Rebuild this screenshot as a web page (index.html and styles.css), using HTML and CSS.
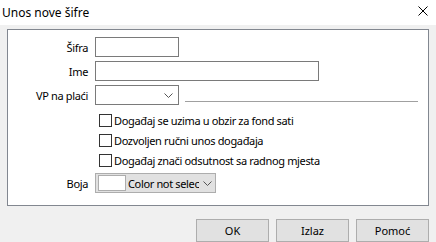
FILE: index.html
```html
<!DOCTYPE html>
<html lang="hr">
<head>
  <meta charset="UTF-8">
  <title>Unos nove šifre</title>
  <link rel="stylesheet" href="styles.css">
</head>
<body>
  <div class="dialog">
    <div class="titlebar">
      <span class="title">Unos nove šifre</span>
      <svg class="close" width="10" height="10" viewBox="0 0 10 10">
        <path d="M0.5 0.5 L9.5 9.5 M9.5 0.5 L0.5 9.5" stroke="#000" stroke-width="1" fill="none"/>
      </svg>
    </div>

    <div class="content">
      <div class="panel">
        <div class="row">
          <label class="lbl" for="sifra">Šifra</label>
          <input type="text" id="sifra" class="field short">
        </div>
        <div class="row">
          <label class="lbl" for="ime">Ime</label>
          <input type="text" id="ime" class="field long">
        </div>
        <div class="row">
          <label class="lbl">VP na plaći</label>
          <div class="combo">
            <svg class="chev" width="9" height="5" viewBox="0 0 9 5">
              <path d="M0.5 0.5 L4.5 4.5 L8.5 0.5" stroke="#555" fill="none"/>
            </svg>
          </div>
          <div class="rule"></div>
        </div>

        <div class="checks">
          <div class="check"><span class="box"></span>Događaj se uzima u obzir za fond sati</div>
          <div class="check"><span class="box"></span>Dozvoljen ručni unos događaja</div>
          <div class="check"><span class="box"></span>Događaj znači odsutnost sa radnog mjesta</div>
        </div>

        <div class="row boja-row">
          <label class="lbl">Boja</label>
          <div class="color-combo">
            <span class="swatch"></span>
            <span class="color-text">Color not selected</span>
            <svg class="chev" width="9" height="5" viewBox="0 0 9 5">
              <path d="M0.5 0.5 L4.5 4.5 L8.5 0.5" stroke="#555" fill="none"/>
            </svg>
          </div>
        </div>
      </div>

      <div class="buttons">
        <button class="btn">OK</button>
        <button class="btn">Izlaz</button>
        <button class="btn">Pomoć</button>
      </div>
    </div>
  </div>
</body>
</html>
```

FILE: styles.css
```css
body {
  margin: 0;
  font-family: "Noto Sans", "Open Sans", sans-serif;
  font-size: 11px;
  letter-spacing: -0.35px;
  color: #000;
  background: #f0f0f0;
}
.dialog {
  width: 436px;
  height: 242px;
  display: flex;
  flex-direction: column;
}
.titlebar {
  height: 25px;
  background: #fff;
  display: flex;
  align-items: center;
  justify-content: space-between;
  padding: 0 8px 0 2px;
}
.title {
  font-size: 12px;
  letter-spacing: 0;
  margin-top: -1px;
}
.close {
  margin-top: -3px;
}
.content {
  padding: 4px 7px 0 7px;
}
.panel {
  background: #fff;
  border: 1px solid #828790;
  height: 168px;
  padding-top: 7px;
  box-sizing: content-box;
}
.row {
  display: flex;
  align-items: center;
  height: 20px;
  margin-bottom: 4px;
}
.lbl {
  width: 80px;
  text-align: right;
  margin-right: 7px;
}
.field {
  height: 20px;
  box-sizing: border-box;
  border: 1px solid #7a7a7a;
  margin: 0;
  padding: 0 3px;
  font: inherit;
}
.short {
  width: 84px;
}
.long {
  width: 224px;
}
.combo {
  width: 84px;
  height: 20px;
  box-sizing: border-box;
  border: 1px solid #7a7a7a;
  display: flex;
  align-items: center;
  justify-content: flex-end;
  padding-right: 5px;
}
.rule {
  width: 233px;
  height: 1px;
  background: #a0a0a0;
  margin: 12px 0 0 6px;
}
.checks {
  padding: 1px 0 0 91px;
}
.check {
  height: 20px;
  display: flex;
  align-items: center;
}
.box {
  width: 13px;
  height: 13px;
  box-sizing: border-box;
  border: 1px solid #333;
  margin-right: 2px;
}
.boja-row {
  margin-top: 3px;
}
.color-combo {
  width: 121px;
  height: 20px;
  box-sizing: border-box;
  border: 1px solid #adadad;
  background: #e1e1e1;
  display: flex;
  align-items: center;
  padding: 0 3px 0 2px;
  overflow: hidden;
}
.swatch {
  flex: none;
  width: 28px;
  height: 16px;
  box-sizing: border-box;
  border: 1px solid #adadad;
  background: #fff;
  margin-right: 2px;
}
.color-text {
  width: 71px;
  white-space: nowrap;
  overflow: hidden;
  flex: none;
}
.color-combo .chev {
  margin-left: auto;
}
.buttons {
  display: flex;
  justify-content: flex-end;
  gap: 7px;
  margin-top: 13px;
}
.btn {
  width: 73px;
  height: 23px;
  background: #e1e1e1;
  border: 1px solid #adadad;
  font: inherit;
  padding: 0;
  color: #000;
}
```
